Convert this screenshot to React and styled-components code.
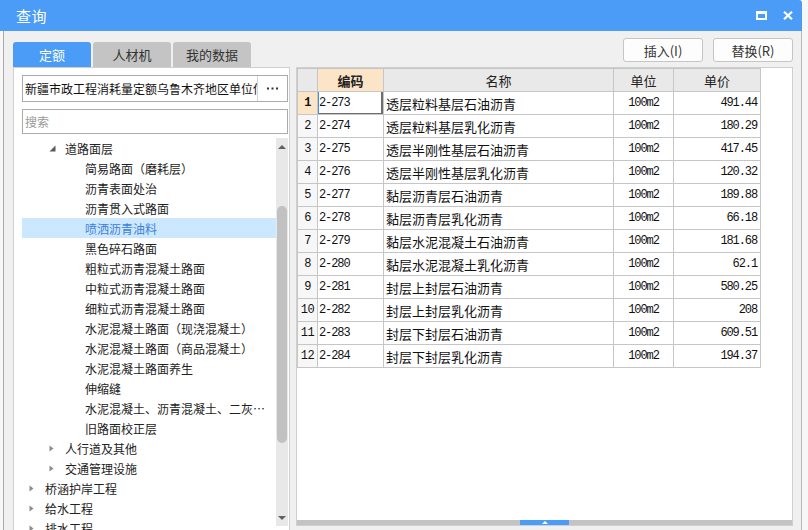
import React from "react";
import styled, { createGlobalStyle } from "styled-components";

const GlobalStyle = createGlobalStyle`
  html, body { margin: 0; padding: 0; background: #f7f7f7; overflow: hidden; }
  body { font-family: "Noto Sans CJK SC", "Noto Sans", sans-serif; color: #222; }
  * { box-sizing: border-box; }
`;

const BLUE = "#4a9cf6";
const GRID = "#c6c6c6";

const Window = styled.div`
  width: 808px;
  height: 530px;
  display: flex;
  flex-direction: column;
  overflow: hidden;
`;

const TitleBar = styled.div`
  width: 802px;
  height: 31px;
  flex: none;
  background: ${BLUE};
  color: #fff;
  display: flex;
  align-items: center;
  padding: 0 9px 1px 16px;
  font-size: 15px;
  border-top-right-radius: 3px;
`;

const TitleText = styled.span`
  letter-spacing: 0.5px;
`;

const WinControls = styled.div`
  margin-left: auto;
  display: flex;
  align-items: center;
  gap: 16px;
`;

const Body = styled.div`
  margin-left: 3px;
  width: 799px;
  flex: 1;
  min-height: 0;
  background: #f0f0f0;
  border-left: 1px solid #ababab;
  border-right: 1px solid #b8b8b8;
  padding: 0 8px 0 9px;
  display: flex;
  flex-direction: column;
  overflow: hidden;
`;

const TopRow = styled.div`
  height: 36px;
  flex: none;
  display: flex;
  justify-content: space-between;
`;

const Tabs = styled.div`
  display: flex;
  gap: 2px;
  align-self: flex-end;
`;

const Tab = styled.div`
  width: 78px;
  height: 25px;
  border-radius: 3px 3px 0 0;
  background: ${(p) => (p.$active ? BLUE : "#c4c4c4")};
  color: ${(p) => (p.$active ? "#fff" : "#333")};
  font-size: 13px;
  display: flex;
  align-items: center;
  justify-content: center;
`;

const Buttons = styled.div`
  display: flex;
  gap: 10px;
  margin-top: 7px;
  align-self: flex-start;
`;

const Button = styled.div`
  width: 80px;
  height: 24px;
  background: #fdfdfd;
  border: 1px solid #c5c5c5;
  border-radius: 3px;
  font-size: 13px;
  color: #333;
  display: flex;
  align-items: center;
  justify-content: center;
`;

const Panels = styled.div`
  flex: 1;
  min-height: 0;
  display: flex;
  gap: 6px;
`;

const LeftPanel = styled.div`
  width: 277px;
  flex: none;
  background: #fff;
  border: 1px solid #cfcfcf;
  border-bottom: none;
  padding: 7px 1px 0 8px;
  display: flex;
  flex-direction: column;
  min-height: 0;
`;

const Combo = styled.div`
  height: 27px;
  flex: none;
  border: 1px solid #ababab;
  display: flex;
`;

const ComboText = styled.div`
  flex: 1;
  min-width: 0;
  overflow: hidden;
  white-space: nowrap;
  font-size: 12px;
  line-height: 25px;
  padding-left: 2px;
  color: #111;
`;

const ComboButton = styled.div`
  width: 30px;
  flex: none;
  border-left: 1px solid #d4d4d4;
  display: flex;
  align-items: center;
  justify-content: center;
`;

const Search = styled.div`
  margin-top: 7px;
  height: 25px;
  flex: none;
  border: 1px solid #ababab;
  font-size: 12px;
  line-height: 23px;
  padding-left: 2px;
  color: #9a9a9a;
`;

const TreeArea = styled.div`
  margin-top: 4px;
  flex: 1;
  min-height: 0;
  display: flex;
`;

const TreeList = styled.div`
  flex: 1;
  min-width: 0;
  overflow: hidden;
`;

const TreeRow = styled.div`
  height: 20px;
  display: flex;
  align-items: center;
  padding-left: ${(p) => 7 + p.$level * 20}px;
  background: ${(p) => (p.$selected ? "#cce8ff" : "transparent")};
  color: ${(p) => (p.$selected ? "#3d7fd6" : "#222")};
  font-size: 12px;
  white-space: nowrap;
`;

const ArrowSlot = styled.span`
  width: 16px;
  flex: none;
  display: flex;
  align-items: center;
`;

const Label = styled.span`
  min-width: 0;
  overflow: hidden;
  text-overflow: ellipsis;
  padding-right: 10px;
`;

const VScroll = styled.div`
  width: 12px;
  height: 388px;
  flex: none;
  background: #e8e8e8;
  display: flex;
  flex-direction: column;
  align-items: center;
`;

const ScrollArrow = styled.div`
  height: 17px;
  flex: none;
  display: flex;
  align-items: center;
  justify-content: center;
`;

const VThumb = styled.div`
  margin-top: 51px;
  width: 10px;
  height: 237px;
  border-radius: 5px;
  background: #c1c1c1;
`;

const Spacer = styled.div`
  flex: 1;
`;

const RightPanel = styled.div`
  width: 497px;
  height: 459px;
  flex: none;
  align-self: flex-start;
  background: #fff;
  border: 1px solid #cfcfcf;
  display: flex;
  flex-direction: column;
`;

const Grid = styled.div`
  width: 464px;
  border-left: 1px solid ${GRID};
  border-top: 1px solid ${GRID};
`;

const GridRow = styled.div`
  display: grid;
  grid-template-columns: 20px 66px 230px 60px 87px;
`;

const Cell = styled.div`
  height: 23px;
  border-right: 1px solid ${GRID};
  border-bottom: 1px solid ${GRID};
  display: flex;
  align-items: center;
  white-space: nowrap;
  overflow: hidden;
`;

const HeadCell = styled(Cell)`
  justify-content: center;
  background: ${(p) => (p.$active ? "#fce4c6" : "#e9e9e9")};
  font-size: 13px;
  font-weight: ${(p) => (p.$active ? "bold" : "normal")};
  color: #222;
`;

const Mono = `
  font-family: "Liberation Mono", "DejaVu Sans Mono", monospace;
  font-size: 12px;
  letter-spacing: -1.1px;
  color: #111;
`;

const NumCell = styled(Cell)`
  ${Mono}
  letter-spacing: -0.5px;
  justify-content: center;
  background: ${(p) => (p.$active ? "#fce4c6" : "#f7f7f7")};
  font-weight: ${(p) => (p.$active ? "bold" : "normal")};
`;

const CodeCell = styled(Cell)`
  ${Mono}
  padding-left: 1px;
  box-shadow: ${(p) =>
    p.$current
      ? "inset 1px 0 0 #3c8ef0, inset -2px 0 0 #6e6e6e, inset 0 -1px 0 #6e6e6e"
      : "none"};
`;

const NameCell = styled(Cell)`
  font-size: 13px;
  padding-left: 2px;
  color: #111;
`;

const UnitCell = styled(Cell)`
  ${Mono}
  justify-content: center;
`;

const PriceCell = styled(Cell)`
  ${Mono}
  justify-content: flex-end;
  padding-right: 3px;
`;

const HBar = styled.div`
  margin-top: auto;
  height: 5px;
  flex: none;
  background: #c3c3c3;
  display: flex;
  justify-content: center;
`;

const HThumb = styled.div`
  width: 49px;
  height: 5px;
  background: ${BLUE};
  display: flex;
  align-items: center;
  justify-content: center;
`;

const MaxIcon = () => (
  <svg width="11" height="9" viewBox="0 0 11 9">
    <rect x="1" y="1.5" width="9" height="6.5" fill="none" stroke="#fff" strokeWidth="2" />
    <rect x="0" y="0" width="11" height="3" fill="#fff" />
  </svg>
);

const CloseIcon = () => (
  <svg width="10" height="9" viewBox="0 0 10 9">
    <path d="M1 0.8 L9 8.2 M9 0.8 L1 8.2" stroke="#fff" strokeWidth="2.2" />
  </svg>
);

const DotsIcon = () => (
  <svg width="11" height="3" viewBox="0 0 11 3">
    <rect x="0" y="0.5" width="2" height="2" fill="#333" />
    <rect x="4.5" y="0.5" width="2" height="2" fill="#333" />
    <rect x="9" y="0.5" width="2" height="2" fill="#333" />
  </svg>
);

const ExpandedArrow = () => (
  <svg width="7" height="7" viewBox="0 0 7 7">
    <path d="M6.5 0.5 L6.5 6.5 L0.5 6.5 Z" fill="#595959" />
  </svg>
);

const CollapsedArrow = () => (
  <svg width="5" height="7" viewBox="0 0 5 7">
    <path d="M0.5 0.5 L4.5 3.5 L0.5 6.5 Z" fill="#8c8c8c" />
  </svg>
);

const UpTri = ({ color = "#606060", w = 8, h = 4 }) => (
  <svg width={w} height={h} viewBox={`0 0 ${w} ${h}`}>
    <path d={`M0 ${h} L${w / 2} 0 L${w} ${h} Z`} fill={color} />
  </svg>
);

const DownTri = () => (
  <svg width="8" height="4" viewBox="0 0 8 4">
    <path d="M0 0 L4 4 L8 0 Z" fill="#606060" />
  </svg>
);

const tree = [
  { level: 1, label: "道路面层", arrow: "open" },
  { level: 2, label: "简易路面（磨耗层）" },
  { level: 2, label: "沥青表面处治" },
  { level: 2, label: "沥青贯入式路面" },
  { level: 2, label: "喷洒沥青油料", selected: true },
  { level: 2, label: "黑色碎石路面" },
  { level: 2, label: "粗粒式沥青混凝土路面" },
  { level: 2, label: "中粒式沥青混凝土路面" },
  { level: 2, label: "细粒式沥青混凝土路面" },
  { level: 2, label: "水泥混凝土路面（现浇混凝土）" },
  { level: 2, label: "水泥混凝土路面（商品混凝土）" },
  { level: 2, label: "水泥混凝土路面养生" },
  { level: 2, label: "伸缩缝" },
  { level: 2, label: "水泥混凝土、沥青混凝土、二灰碎石路面切缝" },
  { level: 2, label: "旧路面校正层" },
  { level: 1, label: "人行道及其他", arrow: "closed" },
  { level: 1, label: "交通管理设施", arrow: "closed" },
  { level: 0, label: "桥涵护岸工程", arrow: "closed" },
  { level: 0, label: "给水工程", arrow: "closed" },
  { level: 0, label: "排水工程", arrow: "closed" },
];

const rows = [
  ["2-273", "透层粒料基层石油沥青", "491.44"],
  ["2-274", "透层粒料基层乳化沥青", "180.29"],
  ["2-275", "透层半刚性基层石油沥青", "417.45"],
  ["2-276", "透层半刚性基层乳化沥青", "120.32"],
  ["2-277", "黏层沥青层石油沥青", "189.88"],
  ["2-278", "黏层沥青层乳化沥青", "66.18"],
  ["2-279", "黏层水泥混凝土石油沥青", "181.68"],
  ["2-280", "黏层水泥混凝土乳化沥青", "62.1"],
  ["2-281", "封层上封层石油沥青", "580.25"],
  ["2-282", "封层上封层乳化沥青", "208"],
  ["2-283", "封层下封层石油沥青", "609.51"],
  ["2-284", "封层下封层乳化沥青", "194.37"],
];

export default function App() {
  return (
    <>
      <GlobalStyle />
      <Window>
        <TitleBar>
          <TitleText>查询</TitleText>
          <WinControls>
            <MaxIcon />
            <CloseIcon />
          </WinControls>
        </TitleBar>
        <Body>
          <TopRow>
            <Tabs>
              <Tab $active>定额</Tab>
              <Tab>人材机</Tab>
              <Tab>我的数据</Tab>
            </Tabs>
            <Buttons>
              <Button>插入(I)</Button>
              <Button>替换(R)</Button>
            </Buttons>
          </TopRow>
          <Panels>
            <LeftPanel>
              <Combo>
                <ComboText>新疆市政工程消耗量定额乌鲁木齐地区单位估价表(2018)</ComboText>
                <ComboButton>
                  <DotsIcon />
                </ComboButton>
              </Combo>
              <Search>搜索</Search>
              <TreeArea>
                <TreeList>
                  {tree.map((n, i) => (
                    <TreeRow key={i} $level={n.level} $selected={n.selected}>
                      <ArrowSlot>
                        {n.arrow === "open" && <ExpandedArrow />}
                        {n.arrow === "closed" && <CollapsedArrow />}
                      </ArrowSlot>
                      <Label>{n.label}</Label>
                    </TreeRow>
                  ))}
                </TreeList>
                <VScroll>
                  <ScrollArrow>
                    <UpTri />
                  </ScrollArrow>
                  <VThumb />
                  <Spacer />
                  <ScrollArrow>
                    <DownTri />
                  </ScrollArrow>
                </VScroll>
              </TreeArea>
            </LeftPanel>
            <RightPanel>
              <Grid>
                <GridRow>
                  <HeadCell />
                  <HeadCell $active>编码</HeadCell>
                  <HeadCell>名称</HeadCell>
                  <HeadCell>单位</HeadCell>
                  <HeadCell>单价</HeadCell>
                </GridRow>
                {rows.map((r, i) => (
                  <GridRow key={r[0]}>
                    <NumCell $active={i === 0}>{i + 1}</NumCell>
                    <CodeCell $current={i === 0}>{r[0]}</CodeCell>
                    <NameCell>{r[1]}</NameCell>
                    <UnitCell>100m2</UnitCell>
                    <PriceCell>{r[2]}</PriceCell>
                  </GridRow>
                ))}
              </Grid>
              <HBar>
                <HThumb>
                  <UpTri color="#fff" w={6} h={3} />
                </HThumb>
              </HBar>
            </RightPanel>
          </Panels>
        </Body>
      </Window>
    </>
  );
}
